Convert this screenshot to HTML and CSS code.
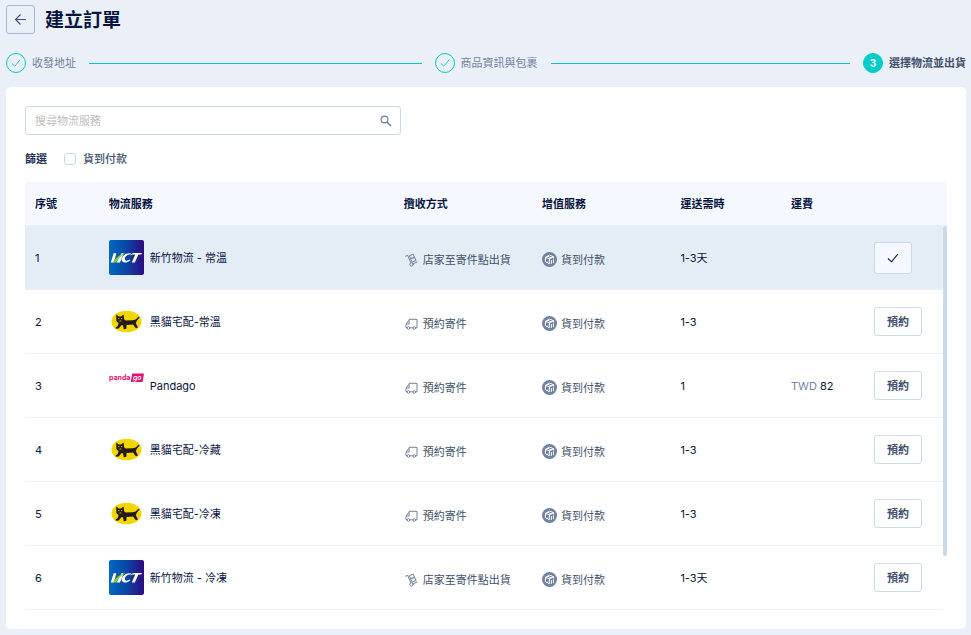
FILE: index.html
```html
<!DOCTYPE html>
<html lang="zh-Hant">
<head>
    <meta charset="UTF-8">
    <meta name="viewport" content="width=device-width, initial-scale=1.0">
    <title>建立訂單</title>
    <link rel="stylesheet" href="styles.css">
</head>
<body>
    <!-- Shared icons and carrier logos -->
    <svg class="sprite" aria-hidden="true">
        <symbol id="check" viewBox="0 0 12 12">
            <path d="M1 6.5 4.5 9.8 11 2" fill="none" stroke="currentColor" stroke-width="1.1"/>
        </symbol>
        <symbol id="cart" viewBox="0 0 14 14">
            <g fill="none" stroke="currentColor" stroke-width="1" stroke-linejoin="round" stroke-linecap="round">
                <path d="M1 3.2 3.2 2.4 6.2 9.5M8.6 10.8 12.6 9"/>
                <circle cx="7" cy="11.4" r="1.7"/>
                <path d="M5.2 2.6 8.6 1.1 10 4.2 6.5 5.6ZM6.5 5.6 10 4.2 11.6 7.5 7.9 9Z"/>
            </g>
        </symbol>
        <symbol id="truck" viewBox="0 0 14 14">
            <g fill="none" stroke="currentColor" stroke-width="1" stroke-linejoin="round">
                <path d="M2.6 10.8H1.5V7.2L3.8 3.8H4.6V2.3H12.5V10.8H11.2M8.3 10.8H5.4M4.6 3.8V7H1.7"/>
                <circle cx="4" cy="11" r="1.3"/>
                <circle cx="9.8" cy="11" r="1.3"/>
            </g>
        </symbol>
        <symbol id="cod" viewBox="0 0 15 15">
            <circle cx="7.5" cy="7.5" r="7.5" fill="#71819f"/>
            <g fill="none" stroke="#fff" stroke-width="1" stroke-linejoin="round">
                <path d="M3.4 5.4 7.6 3.1 11.6 4.8 7.5 6.8ZM3.4 5.4V9.6L7.3 11.7V6.8M11.6 4.8V6.5M5.5 4.3 9.5 6"/>
                <path d="M9.4 11.8V8.2M11.5 11V7.4"/>
            </g>
        </symbol>
        <symbol id="hct" viewBox="0 0 35 35">
            <rect width="35" height="35" rx="2" fill="url(#hctBlue)"/>
            <path d="M4.6 13.2H7.4L4.8 22.6H1.8ZM12.4 13.2H14.6L11 22.6H7.6Z" fill="#fff"/>
            <path d="M21.8 13.2C16.6 12.6 12.8 16 12.6 19.6 12.8 23.6 18 23.2 21.4 20.2L20.6 19.6C18.4 21.2 15.8 21.2 15.8 18.8 16 16.4 18.4 14.4 21.6 14.6Z" fill="#fff"/>
            <path d="M21.4 15.4C22.6 13.4 24 13 26 13H33L32.2 14.6H29.4L25.8 22.6H22.8L26.2 14.6C24 14.5 22.8 14.7 21.4 15.4Z" fill="#fff"/>
            <path d="M3.6 22.6C6.6 17.6 11 14.2 17 13 12.4 15.4 9 18.4 7 22.6Z" fill="#8fd02c"/>
        </symbol>
        <symbol id="cat" viewBox="0 0 35 35">
            <ellipse cx="17.5" cy="17.5" rx="15" ry="10.8" fill="#f3d500"/>
            <path d="M7.2 10.2 9.6 12.4H12L14.6 10.4 15.2 15.4 17 16.6 24 16.2 26.6 15.6 29.8 12.6 30.6 13.4 27.8 16.8 26.8 19.2 28.8 23.2 28 24.2 26.4 23.8 24 20.6 17.6 21 17.2 25H14.6L14.2 21.6 12.4 21.2 9.6 24.6 6.8 24.8 6.6 23.4 8.6 22.2 9.6 19 7.4 17.2Z" fill="#241a1b"/>
            <path d="M9 14.6H10.4M12 14.6H13.4M10.4 17H12.4" stroke="#f3d500" stroke-width="0.8"/>
        </symbol>
    </svg>
    <svg class="sprite" aria-hidden="true">
        <defs>
            <linearGradient id="hctBlue" x1="0" y1="0" x2="1" y2="0">
                <stop offset="0" stop-color="#006ac0"/>
                <stop offset="0.5" stop-color="#0946a5"/>
                <stop offset="1" stop-color="#300b81"/>
            </linearGradient>
        </defs>
    </svg>

    <header class="page-header">
        <button class="back-button" type="button" aria-label="返回">
            <svg width="13" height="13" viewBox="0 0 13 13"><path d="M12 6.5H1.5M6.5 1.5 1.5 6.5 6.5 11.5" fill="none" stroke="currentColor" stroke-width="1.1"/></svg>
        </button>
        <h1>建立訂單</h1>
    </header>

    <ol class="steps">
        <li class="step">
            <span class="step-icon"><svg width="10" height="10"><use href="#check"/></svg></span>
            <span>收發地址</span>
        </li>
        <li class="step">
            <span class="step-icon"><svg width="10" height="10"><use href="#check"/></svg></span>
            <span>商品資訊與包裹</span>
        </li>
        <li class="step current">
            <span class="step-icon">3</span>
            <span>選擇物流並出貨</span>
        </li>
    </ol>

    <main class="card">
        <div class="search">
            <input type="text" placeholder="搜尋物流服務" aria-label="搜尋物流服務">
            <button type="button" aria-label="搜尋">
                <svg width="12" height="12" viewBox="0 0 12 12"><g fill="none" stroke="currentColor"><circle cx="4.5" cy="4.5" r="3.4" stroke-width="1.2"/><path d="M7 7 11 11" stroke-width="1.6"/></g></svg>
            </button>
        </div>

        <div class="filter">
            <span class="filter-title">篩選</span>
            <input type="checkbox" id="codFilter">
            <label for="codFilter">貨到付款</label>
        </div>

        <div class="table-wrap">
            <table>
                <colgroup>
                    <col class="col-no">
                    <col class="col-service">
                    <col class="col-pickup">
                    <col class="col-extra">
                    <col class="col-time">
                    <col class="col-fee">
                    <col class="col-action">
                </colgroup>
                <thead>
                    <tr>
                        <th>序號</th>
                        <th>物流服務</th>
                        <th>攬收方式</th>
                        <th>增值服務</th>
                        <th>運送需時</th>
                        <th>運費</th>
                        <th></th>
                    </tr>
                </thead>
                <tbody>
                    <tr class="selected">
                        <td>1</td>
                        <td><div class="service"><svg class="logo"><use href="#hct"/></svg>新竹物流 - 常溫</div></td>
                        <td><div class="tag"><svg class="tag-icon"><use href="#cart"/></svg>店家至寄件點出貨</div></td>
                        <td><div class="tag"><svg class="cod-icon"><use href="#cod"/></svg>貨到付款</div></td>
                        <td>1-3天</td>
                        <td></td>
                        <td><button class="book chosen" type="button" aria-label="已選擇"><svg width="12" height="12"><use href="#check"/></svg></button></td>
                    </tr>
                    <tr>
                        <td>2</td>
                        <td><div class="service"><svg class="logo"><use href="#cat"/></svg>黑貓宅配-常溫</div></td>
                        <td><div class="tag"><svg class="tag-icon"><use href="#truck"/></svg>預約寄件</div></td>
                        <td><div class="tag"><svg class="cod-icon"><use href="#cod"/></svg>貨到付款</div></td>
                        <td>1-3</td>
                        <td></td>
                        <td><button class="book" type="button">預約</button></td>
                    </tr>
                    <tr>
                        <td>3</td>
                        <td>
                            <div class="service">
                                <svg class="logo" viewBox="0 0 35 35">
                                    <path d="M23.2 5.5H35L33.6 14H21.8Z" fill="#e0126e"/>
                                    <text class="panda-text" x="0" y="12">panda</text>
                                    <text class="go-text" x="24" y="12">go</text>
                                </svg>
                                Pandago
                            </div>
                        </td>
                        <td><div class="tag"><svg class="tag-icon"><use href="#truck"/></svg>預約寄件</div></td>
                        <td><div class="tag"><svg class="cod-icon"><use href="#cod"/></svg>貨到付款</div></td>
                        <td>1</td>
                        <td><span class="currency">TWD</span> 82</td>
                        <td><button class="book" type="button">預約</button></td>
                    </tr>
                    <tr>
                        <td>4</td>
                        <td><div class="service"><svg class="logo"><use href="#cat"/></svg>黑貓宅配-冷藏</div></td>
                        <td><div class="tag"><svg class="tag-icon"><use href="#truck"/></svg>預約寄件</div></td>
                        <td><div class="tag"><svg class="cod-icon"><use href="#cod"/></svg>貨到付款</div></td>
                        <td>1-3</td>
                        <td></td>
                        <td><button class="book" type="button">預約</button></td>
                    </tr>
                    <tr>
                        <td>5</td>
                        <td><div class="service"><svg class="logo"><use href="#cat"/></svg>黑貓宅配-冷凍</div></td>
                        <td><div class="tag"><svg class="tag-icon"><use href="#truck"/></svg>預約寄件</div></td>
                        <td><div class="tag"><svg class="cod-icon"><use href="#cod"/></svg>貨到付款</div></td>
                        <td>1-3</td>
                        <td></td>
                        <td><button class="book" type="button">預約</button></td>
                    </tr>
                    <tr>
                        <td>6</td>
                        <td><div class="service"><svg class="logo"><use href="#hct"/></svg>新竹物流 - 冷凍</div></td>
                        <td><div class="tag"><svg class="tag-icon"><use href="#cart"/></svg>店家至寄件點出貨</div></td>
                        <td><div class="tag"><svg class="cod-icon"><use href="#cod"/></svg>貨到付款</div></td>
                        <td>1-3天</td>
                        <td></td>
                        <td><button class="book" type="button">預約</button></td>
                    </tr>
                </tbody>
            </table>
            <div class="scroll-track"><div class="scroll-thumb"></div></div>
        </div>
    </main>
</body>
</html>
```

FILE: styles.css
```css
* {
    box-sizing: border-box;
}

body {
    margin: 0;
    padding: 5px 5px 6px 6px;
    background-color: #ebeff7;
    color: #071440;
    font-family: Inter, "Noto Sans CJK TC", sans-serif;
    font-size: 11px;
    font-weight: 400;
    line-height: 16px;
}

button, input {
    font: inherit;
    color: inherit;
}

button {
    cursor: pointer;
}

svg {
    display: block;
    flex: none;
}

.sprite {
    position: absolute;
    width: 0;
    height: 0;
}

/* Header */
.page-header {
    display: flex;
    align-items: center;
    gap: 10px;
}

.back-button {
    display: flex;
    align-items: center;
    justify-content: center;
    width: 29px;
    height: 29px;
    padding: 0;
    background: none;
    border: 1px solid #a9b6d3;
    border-radius: 3px;
    color: #43506b;
}

h1 {
    margin: 0;
    padding-top: 2px;
    font-size: 19px;
    font-weight: 700;
    line-height: 27px;
}

/* Steps */
.steps {
    display: flex;
    height: 20px;
    margin: 19px 0 14px;
    padding: 0;
    list-style: none;
    color: #71819f;
}

.step {
    display: flex;
    flex: 1;
    align-items: center;
    gap: 6px;
    white-space: nowrap;
}

/* Line that leads to the next step */
.step:not(.current)::after {
    content: "";
    flex: 1;
    height: 1px;
    margin: 0 13px 0 7px;
    background-color: #00c8c8;
}

.step-icon {
    display: flex;
    align-items: center;
    justify-content: center;
    width: 20px;
    height: 20px;
    border: 1px solid #00cdca;
    border-radius: 50%;
    color: #00cdca;
}

.current {
    flex: none;
    color: #43506b;
    font-weight: 700;
}

.current .step-icon {
    background-color: #00cdca;
    color: #fff;
    font-size: 10px;
}

/* Card */
.card {
    padding: 19px;
    background-color: #fff;
    border-radius: 5px;
}

.search {
    display: flex;
    align-items: center;
    max-width: 376px;
    height: 29px;
    padding: 0 8px 0 9px;
    border: 1px solid #cbdaeb;
    border-radius: 3px;
}

.search input {
    flex: 1;
    min-width: 0;
    padding: 0;
    border: none;
    outline: none;
    background: none;
}

.search input::placeholder {
    color: #bdbdbd;
}

.search button {
    padding: 0;
    border: none;
    background: none;
    color: #71819f;
}

.filter {
    display: flex;
    align-items: center;
    margin: 16px 0 15px;
    color: #43506b;
    font-weight: 500;
}

.filter-title {
    margin-right: 17px;
    color: #26335a;
    font-weight: 700;
}

.filter input {
    appearance: none;
    width: 12px;
    height: 12px;
    margin: 0 7px 0 0;
    border: 1px solid #c8d9ee;
    border-radius: 3px;
    background-color: #fff;
}

.filter input:checked {
    background-color: #00cdca;
}

/* Table */
.table-wrap {
    position: relative;
}

table {
    width: 100%;
    table-layout: fixed;
    border-collapse: separate;
    border-spacing: 0;
}

.col-no {
    width: 8%;
}

.col-service {
    width: 32%;
}

.col-pickup, .col-extra {
    width: 15%;
}

.col-time {
    width: 12%;
}

.col-fee {
    width: 9%;
}

.col-action {
    width: 9%;
}

th, td {
    padding: 0 10px;
    text-align: left;
    white-space: nowrap;
}

th {
    height: 44px;
    background-color: #f5f8fe;
    border-bottom: 1px solid #ebeff7;
    font-weight: 700;
}

th:first-child {
    border-top-left-radius: 4px;
}

th:last-child {
    border-top-right-radius: 4px;
}

td {
    height: 64px;
    border-bottom: 1px solid #ebeff7;
}

.selected td {
    background-color: #e4ecf6;
}

.service {
    display: flex;
    align-items: center;
    gap: 6px;
}

.logo {
    width: 35px;
    height: 35px;
}

.panda-text, .go-text {
    fill: #e0126e;
    font-family: Inter, sans-serif;
    font-size: 7px;
    font-weight: 700;
}

.go-text {
    fill: #fff;
    font-style: italic;
    font-weight: 500;
}

.tag {
    display: flex;
    align-items: center;
    gap: 4px;
    padding-top: 4px;
    color: #43506b;
}

.tag-icon {
    width: 15px;
    height: 14px;
    color: #71819f;
}

.cod-icon {
    width: 15px;
    height: 15px;
}

.currency {
    color: #71819f;
}

.book {
    display: flex;
    align-items: center;
    justify-content: center;
    height: 29px;
    padding: 0 12px;
    background-color: #fff;
    border: 1px solid #cbdaeb;
    border-radius: 3px;
    color: #43506b;
    font-weight: 700;
}

.chosen {
    height: 32px;
    background-color: #f5f8fe;
    color: #071440;
}

/* Scrollbar beside the rows, below the table head */
.scroll-track {
    position: absolute;
    top: 44px;
    right: 0;
    bottom: 0;
    width: 4px;
    background-color: #fff;
}

.scroll-thumb {
    height: 86%;
    border-radius: 2px;
    background-color: #cbdaeb;
}
```
